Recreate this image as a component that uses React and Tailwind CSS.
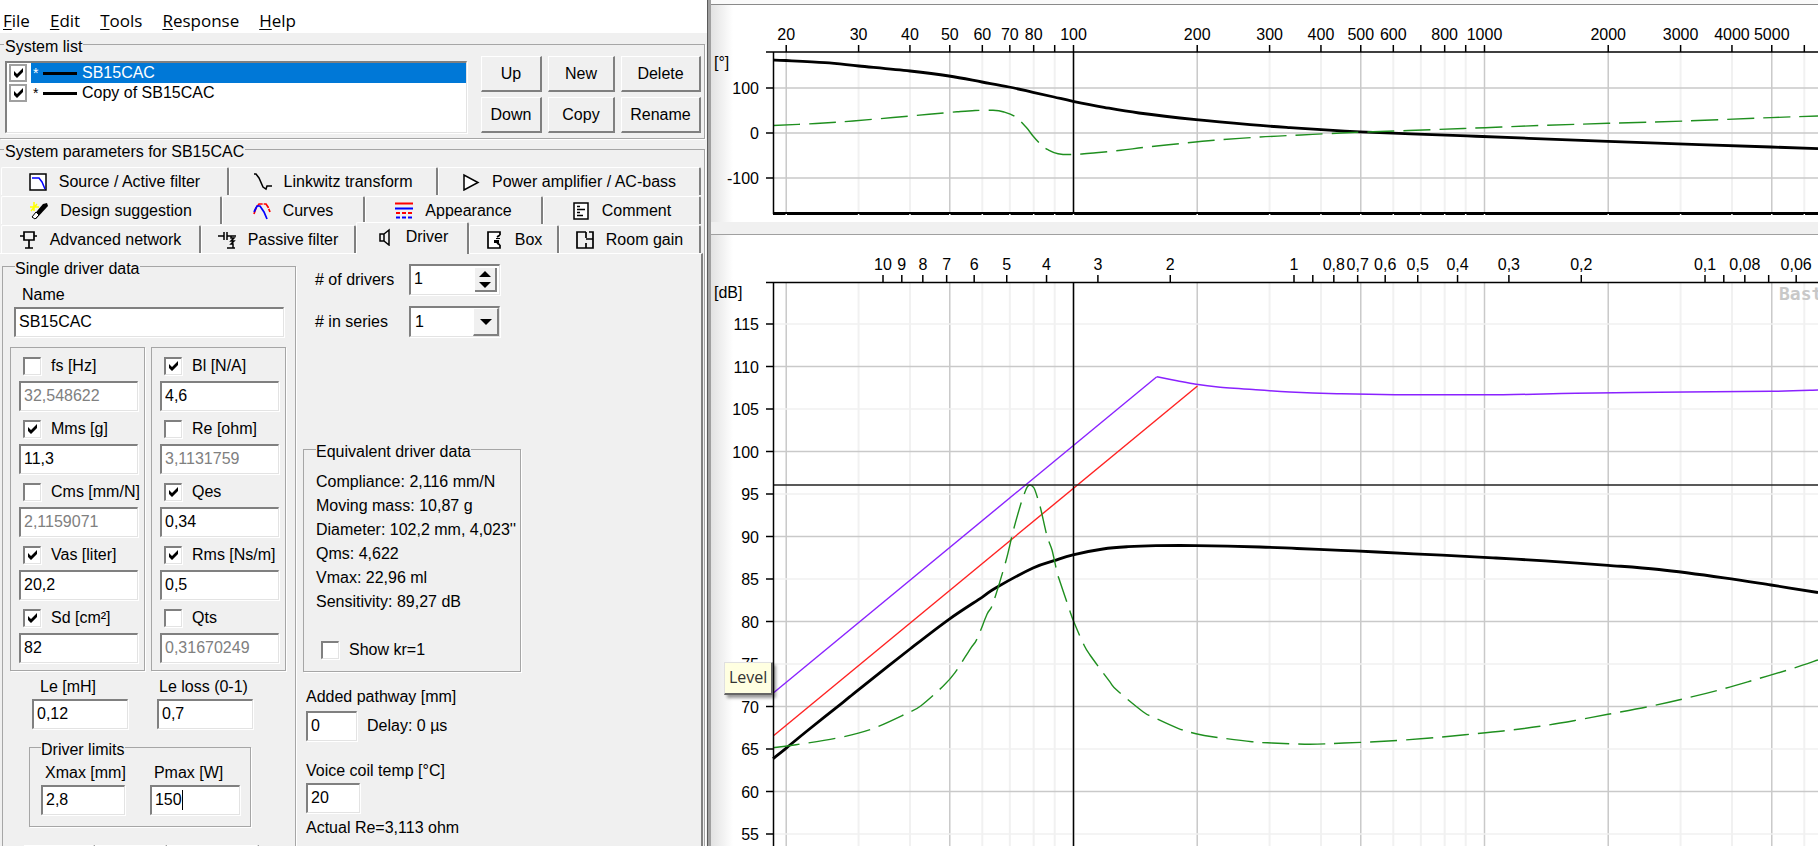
import { useState } from 'react';
import clsx from 'clsx';

const UI_FONT = 'font-["Liberation_Sans",Arial,sans-serif]';
const MENU_FONT = 'font-["Open_Sans","Noto_Sans",sans-serif]';

const sunken = 'border-t-2 border-l-2 border-r border-b border-t-[#808080] border-l-[#808080] border-r-[#e3e3e3] border-b-[#e3e3e3] shadow-[1px_1px_0_#fff] bg-white';
const raised = 'border-t border-l border-r-2 border-b-2 border-t-white border-l-white border-r-[#808080] border-b-[#808080] bg-[#f0f0f0]';

/* ---------- small controls ---------- */

const GroupBox = ({ title, className, legendClass, children }) => (
  <fieldset className={clsx('min-w-0 border border-[#a6a6a6] shadow-[1px_1px_0_#fff]', className)}>
    <legend className={clsx('h-5 leading-[26px] whitespace-nowrap', legendClass)}>{title}</legend>
    {children}
  </fieldset>
);

const Tick = () => (
  <svg className="pointer-events-none absolute inset-0" width="18" height="18" viewBox="0 0 18 18">
    <path d="M5 7v4l3 3 6-6V4L8 10z" fill="#000" />
  </svg>
);

const CheckBox = ({ id, label, checked, onChange, flat }) => (
  <span className="flex items-center">
    <span className="relative block h-[18px] w-[18px] shrink-0">
      <input
        id={id}
        type="checkbox"
        checked={checked}
        onChange={onChange}
        aria-label={flat ? label : undefined}
        className={clsx('block h-[18px] w-[18px] appearance-none', flat ? 'border-2 border-[#a0a0a0] bg-white' : sunken)}
      />
      {checked && <Tick />}
    </span>
    {!flat && <label htmlFor={id} className="ml-[10px] whitespace-nowrap">{label}</label>}
  </span>
);

const TextBox = ({ className, ...props }) => (
  <input type="text" className={clsx('block h-[30px] px-[3px] pb-[2px] text-base outline-none', sunken, className)} {...props} />
);

const PushButton = ({ children }) => (
  <button type="button" className={clsx('h-[36px] text-center', raised)}>{children}</button>
);

/* ---------- tab icons ---------- */

const icons = {
  source: (
    <>
      <rect x="1" y="1" width="16" height="16" fill="#fff" stroke="#000" strokeWidth="1.5" />
      <path d="M3 5h7l3 4 3 7" fill="none" stroke="#00f" strokeWidth="1.5" />
    </>
  ),
  linkwitz: <path d="M0 1h2l3 4 4 9 3 2 1-3h5" fill="none" stroke="#000" strokeWidth="1.5" />,
  amp: <path d="M2 2v15l14-7.5z" fill="#fff" stroke="#000" strokeWidth="1.5" />,
  design: (
    <>
      <path d="M2 15L13 2l4-1 1 3L6 17z" fill="#000" />
      <path d="M2 15l4-5 3 3-4 4z" fill="#fff" stroke="#000" />
      <path d="M4 0v9M0 5h9M1 9l6-7" stroke="#ff0" strokeWidth="1.5" />
    </>
  ),
  curves: (
    <>
      <path d="M1 12l2-6 3-4h7l2 3 2 5" fill="none" stroke="#f00" strokeWidth="1.7" strokeDasharray="7 1" />
      <path d="M1 10l3-6h3l4 6 3 7" fill="none" stroke="#00f" strokeWidth="1.7" />
    </>
  ),
  appearance: (
    <>
      <path d="M0 1.5h18" stroke="#f00" strokeWidth="2" />
      <path d="M0 6.5h18" stroke="#00f" strokeWidth="2" />
      <path d="M1 11h17" stroke="#f00" strokeWidth="2" strokeDasharray="4 2" />
      <path d="M1 15.5h17" stroke="#00f" strokeWidth="2" strokeDasharray="4 2" />
    </>
  ),
  comment: (
    <>
      <rect x="2" y="1" width="14" height="16" fill="#fff" stroke="#000" strokeWidth="1.5" />
      <path d="M5 4.5h3M5 7.5h8M5 10.5h3M5 13.5h6" stroke="#000" strokeWidth="1.5" />
    </>
  ),
  network: <path d="M4 1h10v8H4zM0 5h4M14 5h3M9 9v8M5 17h8" fill="none" stroke="#000" strokeWidth="1.7" />,
  passive: <path d="M0 5h6M6 1v8M9 1v8M9 5h9M13 5v2h3l-3 3h3l-3 3h2v4M9 17h8" fill="none" stroke="#000" strokeWidth="1.5" />,
  driver: <path d="M4 6h4v7H4zM8 6l5-4v15l-5-4" fill="none" stroke="#000" strokeWidth="1.5" />,
  box: (
    <>
      <path d="M3 1h12v4l-4 2v4l4 2v4H3z" fill="#fff" />
      <path d="M15 4V1H3v16h12v-3M15 4l-3 2M15 14l-3-2" fill="none" stroke="#000" strokeWidth="1.7" />
      <path d="M11 7h4v1h-4zM9 9h5v3H9z" fill="#000" />
    </>
  ),
  room: <path d="M10 1H1v16h16V1h-4M10 1v6M10 12v5M10 8h7" fill="none" stroke="#000" strokeWidth="1.7" />,
};

const tabRows = [
  [
    { id: 'source', label: 'Source / Active filter', width: 'w-[228px]' },
    { id: 'linkwitz', label: 'Linkwitz transform', width: 'w-[209px]' },
    { id: 'amp', label: 'Power amplifier / AC-bass', width: 'flex-1' },
  ],
  [
    { id: 'design', label: 'Design suggestion', width: 'w-[221px]' },
    { id: 'curves', label: 'Curves', width: 'w-[143px]' },
    { id: 'appearance', label: 'Appearance', width: 'w-[178px]' },
    { id: 'comment', label: 'Comment', width: 'flex-1' },
  ],
  [
    { id: 'network', label: 'Advanced network', width: 'w-[200px]' },
    { id: 'passive', label: 'Passive filter', width: 'w-[155px]' },
    { id: 'driver', label: 'Driver', width: 'w-[113px]' },
    { id: 'box', label: 'Box', width: 'w-[90px]' },
    { id: 'room', label: 'Room gain', width: 'flex-1' },
  ],
];

const Tab = ({ tab, active, onClick }) => (
  <button
    type="button"
    role="tab"
    aria-selected={active}
    onClick={onClick}
    className={clsx(
      'flex items-center justify-center gap-3 rounded-t-[2px] border-t border-l border-r-2 border-t-white border-l-white border-r-[#808080] bg-[#f0f0f0] whitespace-nowrap',
      active ? 'z-10 -mt-[3px] -mb-px h-[32px] pb-1' : 'h-[28px]',
      tab.width,
    )}
  >
    <svg width="18" height="18" viewBox="0 0 18 18" className="shrink-0">{icons[tab.id]}</svg>
    {tab.label}
  </button>
);

/* ---------- driver page ---------- */

const leftParams = [
  { id: 'fs', label: 'fs [Hz]', value: '32,548622', on: false },
  { id: 'mms', label: 'Mms [g]', value: '11,3', on: true },
  { id: 'cms', label: 'Cms [mm/N]', value: '2,1159071', on: false },
  { id: 'vas', label: 'Vas [liter]', value: '20,2', on: true },
  { id: 'sd', label: 'Sd [cm²]', value: '82', on: true },
];

const rightParams = [
  { id: 'bl', label: 'Bl [N/A]', value: '4,6', on: true },
  { id: 're', label: 'Re [ohm]', value: '3,1131759', on: false },
  { id: 'qes', label: 'Qes', value: '0,34', on: true },
  { id: 'rms', label: 'Rms [Ns/m]', value: '0,5', on: true },
  { id: 'qts', label: 'Qts', value: '0,31670249', on: false },
];

const ParamColumn = ({ params }) => {
  const [enabled, setEnabled] = useState(() => Object.fromEntries(params.map((p) => [p.id, p.on])));

  return (
    <div className="w-[135px] border border-[#a6a6a6] pb-[7px] pl-2 shadow-[1px_1px_0_#fff]">
      {params.map((p) => (
        <div key={p.id}>
          <div className="flex h-[33px] items-center pt-[2px] pl-1">
            <CheckBox
              id={p.id}
              label={p.label}
              checked={enabled[p.id]}
              onChange={() => setEnabled({ ...enabled, [p.id]: !enabled[p.id] })}
            />
          </div>
          <TextBox
            aria-label={p.label}
            defaultValue={p.value}
            disabled={!enabled[p.id]}
            className="w-[119px] disabled:text-[#808080]"
          />
        </div>
      ))}
    </div>
  );
};

const SingleDriver = () => (
  <GroupBox title="Single driver data" className="ml-[2px] h-[640px] w-[294px] pl-[7px]" legendClass="ml-[5px]">
    <label htmlFor="name" className="mt-[7px] ml-3 block leading-6">Name</label>
    <TextBox id="name" defaultValue="SB15CAC" className="ml-1 w-[270px]" />
    <div className="mt-[10px] flex gap-[6px]">
      <ParamColumn params={leftParams} />
      <ParamColumn params={rightParams} />
    </div>
    <div className="mt-1 ml-[22px] flex gap-[29px]">
      <div>
        <label htmlFor="le" className="ml-2 block leading-6">Le [mH]</label>
        <TextBox id="le" defaultValue="0,12" className="w-[96px]" />
      </div>
      <div>
        <label htmlFor="leloss" className="ml-[2px] block leading-6 whitespace-nowrap">Le loss (0-1)</label>
        <TextBox id="leloss" defaultValue="0,7" className="w-[96px]" />
      </div>
    </div>
    <GroupBox title="Driver limits" className="mt-2 ml-[19px] h-[90px] w-[222px] pl-[11px]">
      <div className="mt-1 flex gap-6">
        <div>
          <label htmlFor="xmax" className="ml-1 block leading-6 whitespace-nowrap">Xmax [mm]</label>
          <TextBox id="xmax" defaultValue="2,8" className="w-[84px]" />
        </div>
        <div>
          <label htmlFor="pmax" className="ml-1 block leading-6 whitespace-nowrap">Pmax [W]</label>
          <div className="relative">
            <TextBox id="pmax" defaultValue="150" className="w-[90px]" />
            {/* text caret */}
            <span className="absolute top-[5px] left-8 h-5 w-px bg-black" />
          </div>
        </div>
      </div>
    </GroupBox>
    <div className="mt-[18px] ml-[14px] flex">
      <div className={clsx('h-[36px] w-[71px]', raised)} />
      <div className={clsx('h-[36px] w-[72px]', raised)} />
      <div className={clsx('h-[36px] w-[92px]', raised)} />
    </div>
  </GroupBox>
);

const equivalent = [
  'Compliance: 2,116 mm/N',
  'Moving mass: 10,87 g',
  "Diameter: 102,2 mm, 4,023''",
  'Qms: 4,622',
  'Vmax: 22,96 ml',
  'Sensitivity: 89,27 dB',
];

const Arrow = ({ up }) => (
  <svg width="12" height="6" viewBox="0 0 12 6">
    <path d={up ? 'M0 6h12L6 0z' : 'M0 0h12L6 6z'} fill="#000" />
  </svg>
);

const DriverSetup = () => {
  const [drivers, setDrivers] = useState(1);
  const [showKr, setShowKr] = useState(false);

  return (
    <div className="ml-[7px] pt-[8px]">
      <div className="flex items-center">
        <label htmlFor="drivers" className="ml-3 w-[94px] whitespace-nowrap"># of drivers</label>
        <div className={clsx('flex h-[31px] w-[91px] p-[2px] pl-0', sunken)}>
          <input
            id="drivers"
            type="text"
            value={drivers}
            onChange={(e) => setDrivers(Number(e.target.value) || 1)}
            className="w-0 flex-1 px-[3px] pb-[2px] outline-none"
          />
          <div className="flex w-[22px] flex-col">
            <button type="button" aria-label="More" onClick={() => setDrivers(drivers + 1)} className="flex h-3 items-center justify-center border-r-2 border-[#808080] bg-[#f0f0f0]">
              <Arrow up />
            </button>
            <button type="button" aria-label="Fewer" onClick={() => setDrivers(Math.max(1, drivers - 1))} className="flex h-3 items-center justify-center border-r-2 border-b-2 border-[#808080] bg-[#f0f0f0]">
              <Arrow />
            </button>
          </div>
        </div>
      </div>

      <div className="mt-[11px] flex items-center">
        <label htmlFor="series" className="ml-3 w-[94px] whitespace-nowrap"># in series</label>
        <div className={clsx('flex h-[31px] w-[91px]', sunken)}>
          <select id="series" defaultValue="1" className="w-0 flex-1 appearance-none px-1 outline-none">
            <option>1</option>
          </select>
          <span className={clsx('flex w-[26px] items-center justify-center', raised)}>
            <Arrow />
          </span>
        </div>
      </div>

      <GroupBox title="Equivalent driver data" className="mt-[102px] h-[233px] w-[218px] pl-3">
        <ul className="mt-[11px]">
          {equivalent.map((line) => (
            <li key={line} className="leading-6 whitespace-nowrap">{line}</li>
          ))}
        </ul>
        <div className="mt-[26px] ml-[5px]">
          <CheckBox id="kr" label="Show kr=1" checked={showKr} onChange={() => setShowKr(!showKr)} />
        </div>
      </GroupBox>

      <div className="ml-[3px]">
        <label htmlFor="pathway" className="mt-[13px] block leading-6">Added pathway [mm]</label>
        <div className="mt-[2px] flex items-center">
          <TextBox id="pathway" defaultValue="0" className="w-[51px]" />
          <span className="ml-[10px]">Delay: 0 µs</span>
        </div>
        <label htmlFor="temp" className="mt-[18px] block leading-6">Voice coil temp [°C]</label>
        <TextBox id="temp" defaultValue="20" className="w-[54px]" />
        <p className="mt-[3px] leading-6">Actual Re=3,113 ohm</p>
      </div>
    </div>
  );
};

const systems = ['SB15CAC', 'Copy of SB15CAC'];

const SystemList = () => {
  const [selected, setSelected] = useState(0);
  const [visible, setVisible] = useState([true, true]);

  return (
    <GroupBox title="System list" className="mr-[2px] border-l-0 pb-[5px]" legendClass="ml-1 px-px">
      <div className="flex gap-[14px] pt-[2px] pr-[3px] pl-[5px]">
        <ul className={clsx('mt-[5px] h-[72px] flex-1', sunken)}>
          {systems.map((name, i) => (
            <li key={name} className="flex h-5 items-center pl-[2px]">
              <CheckBox
                flat
                id={`sys-${i}`}
                label={name}
                checked={visible[i]}
                onChange={() => setVisible(visible.map((v, j) => (j === i ? !v : v)))}
              />
              <button
                type="button"
                onClick={() => setSelected(i)}
                className={clsx('ml-1 flex h-5 flex-1 items-center pl-[2px] text-left', selected === i && 'bg-[#0078d7] text-white')}
              >
                <span className="w-[10px] text-sm leading-4">*</span>
                <span className="h-[3px] w-[34px] bg-black" />
                <span className="ml-[5px]">{name}</span>
              </button>
            </li>
          ))}
        </ul>
        <div className="grid grid-cols-[61px_67px_80px] gap-x-[6px] gap-y-[5px]">
          <PushButton>Up</PushButton>
          <PushButton>New</PushButton>
          <PushButton>Delete</PushButton>
          <PushButton>Down</PushButton>
          <PushButton>Copy</PushButton>
          <PushButton>Rename</PushButton>
        </div>
      </div>
    </GroupBox>
  );
};

/* ---------- charts ---------- */

// log frequency axis, one decade is 411 px wide
const fx = (hz) => 362.5 + 411 * (Math.log10(hz) - 2);
// wavelength axis [m]
const wx = (m) => 583 - 411 * Math.log10(m);
const dbY = (db) => 89 + (115 - db) * 8.5;

const AXIS_X = 62.5;
const majors = [20, 50, 100, 200, 500, 1000, 2000, 5000];
const minors = [30, 40, 60, 70, 80, 90, 300, 400, 600, 700, 800, 900, 3000, 4000, 6000];
const unlabelled = [90, 700, 900, 6000];
const waves = [10, 9, 8, 7, 6, 5, 4, 3, 2, 1, 0.9, 0.8, 0.7, 0.6, 0.5, 0.4, 0.3, 0.2, 0.1, 0.09, 0.08, 0.07, 0.06];
const unlabelledWaves = [0.9, 0.09, 0.07];
const levels = [115, 110, 105, 100, 95, 90, 85, 80, 75, 70, 65, 60, 55];

const phaseTotal = '62,55 75,55.5 114,57.7 148,61 199,66 238,71 271,77 298,82 322,87.3 343,92 362,96.3 393,102.3 428,108 485,114.7 539,119.7 579,122.7 618,125.2 649,126.8 700,128.8 756,130.9 818,133.3 897,136.3 988,139.7 1060,142 1107,143.7';
const phaseImpedance = '62,120.5 105,118.5 142,116 182,112.5 218,109.3 246,106.8 264,105.5 282,105.3 293,107 304,111.5 315,122 322,131 330,139.7 337,144.7 347,148.7 362,149.5 385,147.7 410,145.3 434,142.3 468,138.7 503,135.3 549,132 590,130 630,128 662,126.8 720,124.7 774,122.7 829,120.5 897,118.3 974,116 1060,112.6 1107,111';
const splTotal = '62,523.7 75,513.3 96,496 132,467.3 148,454.3 199,414 238,384.3 271,362.3 285,352.7 322,333 343,325.7 362,319.8 392,314 417,311.7 445,310.7 485,310.6 549,312 586,313.5 630,315.3 666,317 731,320.2 785,323 834,325.9 897,330.3 948,334.5 1013,342.8 1060,350 1107,357.5';
const impedance = '62,512.7 85,509.7 125,503.3 160,494.3 196,478.3 210,470.7 233,450.3 244,437.7 259,414.3 266,404 276,379.3 282,368.3 295,325.7 302,296.7 309,271.7 313,259.7 316,252.3 319,250 323,253 327,264.3 330,275 336,301 341,315 346,337 349,346.7 358,373.3 363,387.3 373,410 379,420 398,445.7 406,455.3 432,476.7 442,482 467,493.3 485,498.7 503,502 541,506.7 561,508 599,509.2 633,508 673,506.3 716,503.3 754,499.7 792,496 829,491.3 865,485.3 897,479.3 936,472 972,464 1008,455 1043,445 1080,434 1107,425';
const maxSpl = '62.6,457.7 445.8,141.7';
const maxSplFlat = '446,141.7 466,145.7 485,149.3 507,152 549,155 579,157 626,158.7 684,159.7 792,159.7 865,158.3 974,157 1060,156.3 1107,155';

// Catmull-Rom spline through the points
const smooth = (points) => {
  const p = points.split(' ').map((s) => s.split(',').map(Number));
  let d = `M${p[0]}`;
  for (let i = 0; i < p.length - 1; i++) {
    const a = p[i - 1] || p[i];
    const b = p[i];
    const c = p[i + 1];
    const e = p[i + 2] || c;
    d += `C${b[0] + (c[0] - a[0]) / 6},${b[1] + (c[1] - a[1]) / 6} ${c[0] - (e[0] - b[0]) / 6},${c[1] - (e[1] - b[1]) / 6} ${c[0]},${c[1]}`;
  }
  return d;
};

const VerticalGrid = ({ top, bottom }) => (
  <>
    {minors.map((f) => (
      <line key={f} x1={fx(f)} x2={fx(f)} y1={top} y2={bottom} stroke="#f1f1f1" strokeWidth="2" />
    ))}
    {majors.map((f) => (
      <line key={f} x1={fx(f)} x2={fx(f)} y1={top} y2={bottom} stroke="#c9c9c9" strokeWidth="1.5" />
    ))}
  </>
);

const PhaseChart = () => (
  <svg className="block h-full w-full text-base" role="img" aria-label="Phase">
    <VerticalGrid top={47} bottom={208} />
    {[100, 0, -100].map((deg) => {
      const y = 128 - deg * 0.45;
      return (
        <g key={deg}>
          <line x1={AXIS_X} x2="100%" y1={y} y2={y} stroke="#c9c9c9" strokeWidth="1.5" />
          <line x1="55" x2={AXIS_X} y1={y} y2={y} stroke="#000" strokeWidth="1.5" />
          <text x="48" y={y + 6} textAnchor="end">{deg}</text>
        </g>
      );
    })}
    <text x="3" y="63">[°]</text>
    {[...majors, ...minors].map((f) => (
      <g key={f}>
        <line x1={fx(f)} x2={fx(f)} y1="40" y2="47" stroke="#000" strokeWidth="1.5" />
        {!unlabelled.includes(f) && <text x={fx(f)} y="35" textAnchor="middle">{f}</text>}
      </g>
    ))}
    <line x1={fx(100)} x2={fx(100)} y1="47" y2="208" stroke="#000" strokeWidth="1.5" />
    <path d={smooth(phaseTotal)} fill="none" stroke="#000" strokeWidth="2.8" />
    <path d={smooth(phaseImpedance)} fill="none" stroke="#1f8f1f" strokeWidth="1.4" strokeDasharray="27 9" />
    <path d="M55 47H3000M62.5 47V209" stroke="#000" strokeWidth="1.5" />
    <line x1="62" x2="100%" y1="208.5" y2="208.5" stroke="#000" strokeWidth="3" />
    {[...majors, ...minors].map((f) => (
      <line key={f} x1={fx(f)} x2={fx(f)} y1="209" y2="211" stroke="#fff" strokeWidth="1.5" />
    ))}
  </svg>
);

const LevelChart = () => (
  <svg className="block h-full w-full text-base" role="img" aria-label="Level">
    <VerticalGrid top={47} bottom="100%" />
    {levels.map((db) => (
      <g key={db}>
        <line x1={AXIS_X} x2="100%" y1={dbY(db)} y2={dbY(db)} stroke={db % 10 ? '#f1f1f1' : '#c9c9c9'} strokeWidth="1.5" />
        <line x1="55" x2={AXIS_X} y1={dbY(db)} y2={dbY(db)} stroke="#000" strokeWidth="1.5" />
        <text x="48" y={dbY(db) + 6} textAnchor="end">{db}</text>
      </g>
    ))}
    <text x="3" y="63">[dB]</text>
    {waves.map((m) => (
      <g key={m}>
        <line x1={wx(m)} x2={wx(m)} y1="40" y2="47" stroke="#000" strokeWidth="1.5" />
        {!unlabelledWaves.includes(m) && (
          <text x={wx(m)} y="35" textAnchor="middle">{String(m).replace('.', ',')}</text>
        )}
      </g>
    ))}
    <text x="1068" y="65" className='font-["DejaVu_Sans_Mono",monospace] text-lg font-bold' fill="#c8c8c8">Bast</text>
    <path d={smooth(splTotal)} fill="none" stroke="#000" strokeWidth="2.8" />
    <line x1="62.5" y1="500.7" x2="486.5" y2="151" stroke="#f22" strokeWidth="1.4" />
    <polyline points={maxSpl} fill="none" stroke="#8a22ff" strokeWidth="1.4" />
    <path d={smooth(maxSplFlat)} fill="none" stroke="#8a22ff" strokeWidth="1.5" />
    <path d={smooth(impedance)} fill="none" stroke="#1f8f1f" strokeWidth="1.4" strokeDasharray="27 9" />
    <line x1={fx(100)} x2={fx(100)} y1="47" y2="100%" stroke="#000" strokeWidth="1.5" />
    <line x1={AXIS_X} x2="100%" y1="250" y2="250" stroke="#222" strokeWidth="1.5" />
    <path d="M55 47.5H3000M62.5 47V3000" stroke="#000" strokeWidth="1.5" />
  </svg>
);

const menu = ['File', 'Edit', 'Tools', 'Response', 'Help'];

export default function App() {
  const [tab, setTab] = useState('driver');

  return (
    <div className={clsx('flex h-screen overflow-hidden bg-[#f0f0f0] text-base leading-5 text-black', UI_FONT)}>
      <main className="flex w-[707px] shrink-0 flex-col overflow-hidden">
        <nav className={clsx('flex h-[34px] shrink-0 gap-5 border-b border-[#f0f0f0] bg-white pt-2 pl-[3px] text-[17px] leading-6', MENU_FONT)}>
          {menu.map((m) => (
            <button key={m} type="button">
              <span className="underline underline-offset-2">{m[0]}</span>{m.slice(1)}
            </button>
          ))}
        </nav>

        <SystemList />

        <GroupBox title="System parameters for SB15CAC" className="mr-[2px] border-l-0" legendClass="ml-1 px-px">
          <div className="pt-2 pr-px">
            <div role="tablist" className="mr-[2px] ml-px flex flex-col gap-px">
              {tabRows.map((row, i) => (
                <div key={i} className="flex">
                  {row.map((t) => (
                    <Tab key={t.id} tab={t} active={tab === t.id} onClick={() => setTab(t.id)} />
                  ))}
                </div>
              ))}
            </div>
            <div className="flex border-t border-r-2 border-t-white border-r-[#808080] pt-[2px]">
              <SingleDriver />
              <DriverSetup />
            </div>
          </div>
        </GroupBox>
      </main>

      <div className="w-1 shrink-0 border-l border-[#5a5a5a] bg-[#a0a0a0]" />

      <section className="flex min-w-0 flex-1 flex-col">
        <div className="h-[5px] shrink-0 border-b border-[#8a8a8a] bg-[#fafafa]" />
        <div className="h-[217px] shrink-0 bg-[linear-gradient(to_right,#e2e2e2,#fff_22px)]">
          <PhaseChart />
        </div>
        <div className="h-[13px] shrink-0 border-b border-[#a0a0a0] bg-[#f0f0f0]" />
        <div className="relative min-h-0 flex-1 bg-[linear-gradient(to_right,#e2e2e2,#fff_22px)]">
          <LevelChart />
          <div className={clsx('absolute top-[427px] left-[13px] border-t border-l border-r-2 border-b-2 border-t-[#e0e0e0] border-l-[#e0e0e0] border-r-[#666] border-b-[#666] bg-[#ffffe1] px-1 pt-[2px] pb-1 leading-6 text-[#333] shadow-[3px_3px_3px_#0006]', MENU_FONT)}>
            Level
          </div>
        </div>
      </section>
    </div>
  );
}
